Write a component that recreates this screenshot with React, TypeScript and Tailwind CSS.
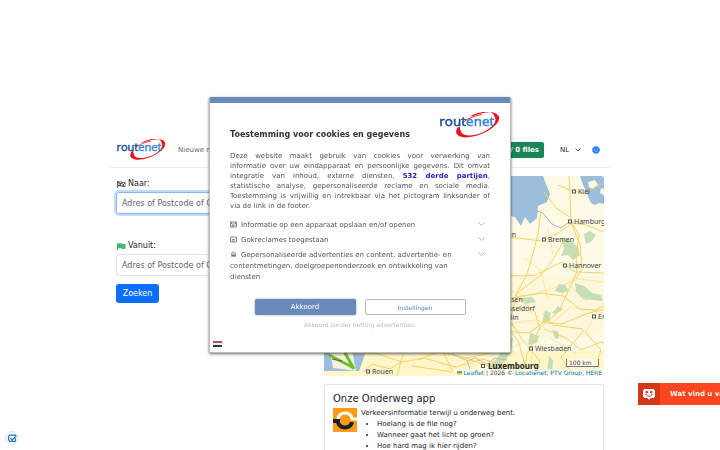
import { ReactNode } from "react";

function Logo({ className }: { className: string }) {
  return (
    <svg viewBox="0 0 100 44" className={className} role="img" aria-label="routenet">
      <path
        fillRule="evenodd"
        fill="#e8141c"
        d="M28 35A37 16 -22 1 1 97 7A37 16 -22 1 1 28 35ZM35 30A30 14 -22 1 0 90 8A30 14 -22 1 0 35 30Z"
      />
      <path d="M30 7h53v17H30Z" fill="#fff" />
      <path d="M38 17c8-6 20-11 31-13" fill="none" stroke="#e8141c" strokeWidth="1.5" />
      <text x="0" y="23" fontFamily="Open Sans, sans-serif" fontSize="22" fill="#1d4f91" stroke="#1d4f91" strokeWidth=".9">
        rout<tspan fill="#3d86cf" stroke="#3d86cf">enet</tspan>
      </text>
    </svg>
  );
}

function Flag({ green }: { green?: boolean }) {
  return (
    <svg viewBox="0 0 18 14" className="h-[7px] w-[9px]" aria-hidden="true">
      <path d="M1 0v14" stroke={green ? "#2f9e5c" : "#333"} strokeWidth="1.6" />
      <path d="M2 1c5-2 9 3 15 0v10c-6 3-10-2-15 0Z" fill={green ? "#49b675" : "#555"} />
      {!green && <path d="M5 1v3h3V2Zm6 2v3h3V3ZM2 5v3h3V5Zm6 1v3h3V6Zm6 0v3h3V6Z" fill="#eee" />}
    </svg>
  );
}

type City = { name: string; x: number; y: number; big?: boolean; bare?: boolean };

const cities: City[] = [
  { name: "Kiel", x: 250, y: 15 },
  { name: "Hamburg", x: 246, y: 45 },
  { name: "Bremen", x: 220, y: 63 },
  { name: "Groningen", x: 159, y: 58, bare: true },
  { name: "Hannover", x: 241, y: 89 },
  { name: "Essen", x: 182, y: 123, bare: true },
  { name: "Düsseldorf", x: 177, y: 132, bare: true },
  { name: "Köln", x: 182, y: 141, bare: true },
  { name: "Erfurt", x: 270, y: 140 },
  { name: "Wiesbaden", x: 207, y: 172 },
  { name: "Rouen", x: 44, y: 195 },
  { name: "Luxembourg", x: 159, y: 190, big: true },
];

function RouteMap() {
  return (
    <section aria-label="Kaart" className="relative h-[200px] w-full overflow-hidden rounded-t-[3px] bg-[#fffae6]">
      <svg viewBox="0 0 280 200" className="h-full w-full" preserveAspectRatio="xMaxYMid slice" aria-hidden="true">
        <rect width="280" height="200" fill="#fffae6" />
        <path d="M170 100h110v55l-40 10-70-15Z" fill="#fff3cf" opacity=".5" />
        <path d="M0 175h280v25H0Z" fill="#fff4b8" opacity=".6" />
        <path d="M0 0h219l3 8 4 10-3 8-9 4-1 12-7 6-5-7-4 9-6-9-13-3-20 3-30 30-40 52-36 10 2 32-10 6-4 10-5 14H0Z" fill="#9dbddd" />
        <path d="m256 0 3 9 4 9 4 9 4 2 4-2 5 1V0Z" fill="#9dbddd" />
        <path d="m264 6 7-2 3 5-5 4-4-2Zm13 6 3 1v6l-4-2Z" fill="#fff9df" />
        <path d="m210 34 9 3 9 11 9 4 8-6" fill="none" stroke="#a8b4cf" />
        <path d="m5 171 22-2 5 26-23-3Z" fill="#f4f2dc" />
        <g fill="#bfdcb4" opacity=".9">
          <path d="m238 62 8 2 8 7 2 8-7 5-5-5-7 1 3-7Z" />
          <path d="m260 58 6-3 6 4-4 6-6 3Z" />
          <path d="m251 107 9 3 8 7 9 2 2 6-10-1-10-1-7-7Z" />
          <path d="m235 108 6 1 4 6-7 2-7-2Z" />
          <path d="m221 134 6 3-2 8-7 2Zm13-4 5 3-7 5-4-1Z" />
          <path d="m197 122 11-1 4 5-10 2Z" />
          <path d="m206 157 9 3-2 7-9 2Zm22-3 6 1 1 7-4 1Z" />
          <path d="m182 160 7 2-2 14-7 10-9 9-5-6 9-9Z" />
          <path d="m225 180 4 4-1 15-5-2Z" />
        </g>
        <g fill="none" stroke="#f5d262" strokeWidth="1">
          <path d="m245 0 1 19 1 26 8 14-3 20 1 17-11 24-7 15-20 18-12 25-3 22" />
          <path d="m217 34-3 24-3 12-8 28-10 19-7 28 12 18 18 22-5 15" />
          <path d="m175 60 17 2 27 3 15-8 14-10 14 2 18 7m-60-40 13 17 13 8m-12-32 14 6 12 2 17-9" />
          <path d="m175 98 22 2 15-1 26-13 13 10 29 1m-93 25 30-5 22 3 17 13 15 1 18-8 21 2" />
          <path d="m175 155 30 2 15-11 18 2 24-10 18-5m-60 20 22 9 15 12 20-8 18 7" />
          <path d="m247 47 9 21 2 25-6 10m-11-40-13 22-11 14-26 20 20 17 5 18" />
          <path d="m260 154-14 17-9 10 10 15m14-40 16 18-8 22m-89-46 14 14 8 28m57-39-30-4-10-12" />
          <path d="m28 177 26 1 24 8 22-4 31 9 28-8 40 13m-121-11-12 8-18-5-9 8m55-12 20-8 30 6 25-6m-50 0 10 20m-50-18-6 22m65-19 30 10m-80-1 40 6" />
        </g>
        <g fill="none" stroke="#ecdc7e" strokeWidth=".6">
          <path d="m180 112 20 8 24-6 31-11 25 3m-97 42 29-4 15 4 19-17 34 6m-79-55 15 12 8 29m34-36-13 22 19 17m-40-73 5 25m47 52-14 26m-52 4-4 34m20-32 26 15m-66-5 30-12" />
        </g>
        <path d="m128 178 16 7 7-3 12 6 8-6 12 2m-40 1 5 13" fill="none" stroke="#bca3b9" strokeWidth=".8" />
        <path d="m5 179 25 13M16 168l14 25" fill="none" stroke="#6fbf2a" strokeWidth="3" />
        <path d="M18 185l-10-2" stroke="#526b47" />
      </svg>
      {cities.map((city) => (
        <span
          key={city.name}
          className={
            city.big
              ? "absolute flex -translate-y-1/2 items-center gap-[3px] font-['Noto_Sans',sans-serif] text-[8px] leading-none font-bold text-[#222]"
              : "absolute flex -translate-y-1/2 items-center gap-[2px] font-['Noto_Sans',sans-serif] text-[7px] leading-none text-[#444]"
          }
          style={{ left: city.x - 2, top: city.y }}
        >
          {!city.bare && <i className="size-1 border border-[#555] bg-white" />}
          {city.name}
        </span>
      ))}
      <span className="absolute right-[5px] bottom-[9px] w-[33px] border border-t-0 border-[#777] bg-white/60 px-[2px] text-[6px] leading-[7px] text-[#444]">
        100 km
      </span>
      <p className="absolute right-0 bottom-0 flex items-center gap-[2px] bg-white/70 px-[2px] text-[6px] leading-[7px] whitespace-nowrap text-[#444]">
        <svg viewBox="0 0 12 8" className="h-1 w-[5px]" aria-hidden="true">
          <path d="M0 0h12v4H0Z" fill="#4c7be1" />
          <path d="M0 4h12v4H0Z" fill="#ffd500" />
        </svg>
        <a href="#leaflet" className="text-[#0078a8]">Leaflet</a> | 2026 ©{" "}
        <a href="#bron" className="text-[#0078a8]">Locatienet, PTV Group, HERE</a>
      </p>
    </section>
  );
}

function Field({ id, label, focus, green }: { id: string; label: string; focus?: boolean; green?: boolean }) {
  return (
    <div>
      <label htmlFor={id} className="flex h-4 items-center gap-[2px] px-px text-[8px]">
        <Flag green={green} />
        {label}
      </label>
      <input
        id={id}
        placeholder="Adres of Postcode of Coördinaten"
        className={
          focus
            ? "block h-[22px] w-full rounded-[3px] border border-[#86b7fe] px-[5px] text-[8px] ring-2 ring-[#c2dbfe] outline-none placeholder:text-[#60666c]"
            : "block h-[22px] w-full rounded-[3px] border border-[#dee2e6] px-[5px] text-[8px] outline-none placeholder:text-[#60666c]"
        }
      />
    </div>
  );
}

function Purpose({ icon, children }: { icon: ReactNode; children: ReactNode }) {
  return (
    <li className="flex items-start justify-between">
      <span className="w-[236px]">
        <svg viewBox="0 0 14 14" className="mr-1 inline size-[7px] align-[-1px]" fill="none" stroke="#666" strokeWidth="1.5" aria-hidden="true">
          {icon}
        </svg>
        {children}
      </span>
      <button aria-label="Meer informatie" className="mr-[5px] pt-[2px]">
        <svg viewBox="0 0 14 8" className="h-1 w-[7px]" fill="none" stroke="#999" strokeWidth="1.4">
          <path d="m1 1 6 6 6-6" />
        </svg>
      </button>
    </li>
  );
}

function ConsentDialog() {
  return (
    <div className="fixed inset-0 flex items-center justify-center">
      <div
        role="dialog"
        aria-labelledby="consent-title"
        className="relative w-[302px] rounded-[2px] border border-t-[6px] border-[#bbb] border-t-[#6a8aba] bg-white px-5 pt-[27px] pb-[22px] text-[#555] shadow-[0_1px_3px_rgba(0,0,0,0.6)]"
      >
        <Logo className="absolute top-[9px] right-[9px] h-[27px] w-[62px]" />
        <h2 id="consent-title" className="text-[8px] leading-[10px] font-bold text-[#333]">
          Toestemming voor cookies en gegevens
        </h2>
        <p className="mt-[11px] text-justify text-[7px] leading-[10px] [text-align-last:justify]">
          Deze website maakt gebruik van cookies voor verwerking van
          <br />
          informatie over uw eindapparaat en persoonlijke gegevens. Dit omvat
          <br />
          integratie van inhoud, externe diensten,{" "}
          <a href="#partijen" className="font-bold text-[#2a1ab9]">532 derde partijen</a>,
          <br />
          statistische analyse, gepersonaliseerde reclame en sociale media.
          <br />
          Toestemming is vrijwillig en intrekbaar via het pictogram linksonder of
          <span className="block [text-align-last:left]">via de link in de footer.</span>
        </p>
        <ul className="mt-[9px] flex flex-col gap-1 text-[7px] leading-[11px]">
          <Purpose icon={<path d="M1 2h12v10H1Zm2 0v4h8V2M4 12V9h3v3m2-3h2" />}>
            Informatie op een apparaat opslaan en/of openen
          </Purpose>
          <Purpose icon={<path d="M1 2h12v10H1Zm3 7 2-3 2 2 2-3M4 10h6" />}>Gokreclames toegestaan</Purpose>
          <Purpose icon={<path d="M4 12C2 7 3 2 7 2s5 5 3 10M6 12V6h2v6M4 9h6" />}>
            Gepersonaliseerde advertenties en content, advertentie- en contentmetingen, doelgroepenonderzoek en
            ontwikkeling van diensten
          </Purpose>
        </ul>
        <div className="mt-4 flex justify-center gap-[9px]">
          <button className="h-4 w-[101px] rounded-[2px] bg-[#6a8aba] text-[7px] text-white shadow-[0_0_2px_#6a8aba]">Akkoord</button>
          <button className="h-4 w-[101px] rounded-[2px] border border-[#bbb] text-[6px] text-[#6680a6]">Instellingen</button>
        </div>
        <button className="mx-auto mt-[5px] block text-[6px] leading-[10px] text-[#bbb]">
          Akkoord zonder betting advertenties.
        </button>
        <button aria-label="Taal: Nederlands" className="absolute bottom-[5px] left-[3px] h-[6px] w-[9px]">
          <svg viewBox="0 0 9 6" className="size-full">
            <path d="M0 0h9v6H0Z" fill="#eee" />
            <path d="M0 0h9v2H0Z" fill="#a7545b" />
            <path d="M0 4h9v2H0Z" fill="#293765" />
          </svg>
        </button>
      </div>
    </div>
  );
}

export default function App() {
  return (
    <div className="h-screen overflow-hidden bg-white font-['DejaVu_Sans',sans-serif] text-[#212529]">
      <div className="mx-auto max-w-[500px] pt-[133px]">
        <header className="flex h-[35px] items-center border-b border-[#e9ecef] px-[6px]">
          <Logo className="h-[22px] w-[51px]" />
          <a href="#route" className="ml-[11px] text-[7px] text-[#666]">Nieuwe route</a>
          <button className="ml-auto h-4 rounded-[2px] bg-[#198754] px-[5px] text-[7px] font-bold text-white">0 km / 0 files</button>
          <div className="relative ml-3 flex items-center">
            <select aria-label="Taal" className="h-4 w-[27px] appearance-none px-1 text-[7px]">
              <option>NL</option>
            </select>
            <svg viewBox="0 0 12 8" className="absolute right-[2px] h-1 w-[6px]" fill="none" stroke="#333" strokeWidth="1.7" aria-hidden="true">
              <path d="m1 1 5 5 5-5" />
            </svg>
          </div>
          <button aria-label="Opties" className="mr-1 ml-[9px]">
            <svg viewBox="0 0 16 16" className="size-2" aria-hidden="true">
              <circle cx="8" cy="8" r="6" fill="#75aaff" stroke="#1673f9" strokeWidth="2" />
              <circle cx="8" cy="8" r="7" fill="none" stroke="#1673f9" strokeWidth="2" strokeDasharray="3 2.5" />
              <path d="m8 2 3 9-7-5h8l-7 5Z" fill="none" stroke="#1673f9" />
            </svg>
          </button>
        </header>
        <main className="flex gap-2 px-[6px] pt-2">
          <form className="flex w-[200px] flex-col gap-2">
            <Field id="naar" label="Naar:" focus />
            <div className="mt-4">
              <Field id="vanuit" label="Vanuit:" green />
            </div>
            <button type="button" className="h-[19px] w-[43px] rounded-[3px] bg-[#0d6efd] text-[8px] text-white">
              Zoeken
            </button>
          </form>
          <div className="flex min-w-0 flex-1 flex-col gap-2">
            <RouteMap />
            <article className="rounded-[3px] border border-[#dee2e6] px-2 py-2">
              <h2 className="text-[10px] leading-3">Onze Onderweg app</h2>
              <div className="mt-[3px] flex gap-1 text-[7px] leading-[11px]">
                <svg viewBox="0 0 24 24" className="size-6" role="img" aria-label="Onderweg">
                  <path d="M0 0h24v24H0Z" fill="#ff9b13" />
                  <path d="M5 11a7 6 0 0 1 14 0h5" fill="none" stroke="#fff" strokeWidth="3" />
                  <path d="M0 13h5a7 6 0 0 0 14 1" fill="none" stroke="#16202d" strokeWidth="4" />
                </svg>
                <div>
                  <p>Verkeersinformatie terwijl u onderweg bent.</p>
                  <ul className="list-disc pl-4">
                    <li>Hoelang is de file nog?</li>
                    <li>Wanneer gaat het licht op groen?</li>
                    <li>Hoe hard mag ik hier rijden?</li>
                  </ul>
                </div>
              </div>
            </article>
          </div>
        </main>
      </div>
      <ConsentDialog />
      <button className="fixed top-[383px] right-0 flex h-[22px] w-[82px] items-center overflow-hidden bg-[#ff461e] text-[7px] font-bold whitespace-nowrap text-white">
        <span className="flex h-full w-[22px] shrink-0 items-center justify-center bg-[#d4381b]">
          <svg viewBox="0 0 24 22" className="h-[11px] w-3" aria-hidden="true">
            <path d="M3 0h18l3 3v12l-3 3h-6l-3 4-3-4H3l-3-3V3Z" fill="#fff" />
            <path d="M6 5h3v3H6Zm9 0h3v3h-3ZM5 10c4 6 10 6 14 0" fill="none" stroke="#c43a28" strokeWidth="2" />
          </svg>
        </span>
        <span className="ml-[10px]">Wat vind u van deze site?</span>
      </button>
      <button aria-label="Cookie-instellingen" className="fixed bottom-[5px] left-[5px] flex size-[14px] items-center justify-center rounded-full border border-[#d2e7f2] bg-[#f4fbff]">
        <svg viewBox="0 0 16 16" className="size-[9px]" fill="none" stroke="#2877a8" strokeWidth="2" aria-hidden="true">
          <path d="M13 7v6H3l-2-3V4l2-2h10l2 3M4 7l3 4 7-7" />
        </svg>
      </button>
    </div>
  );
}
